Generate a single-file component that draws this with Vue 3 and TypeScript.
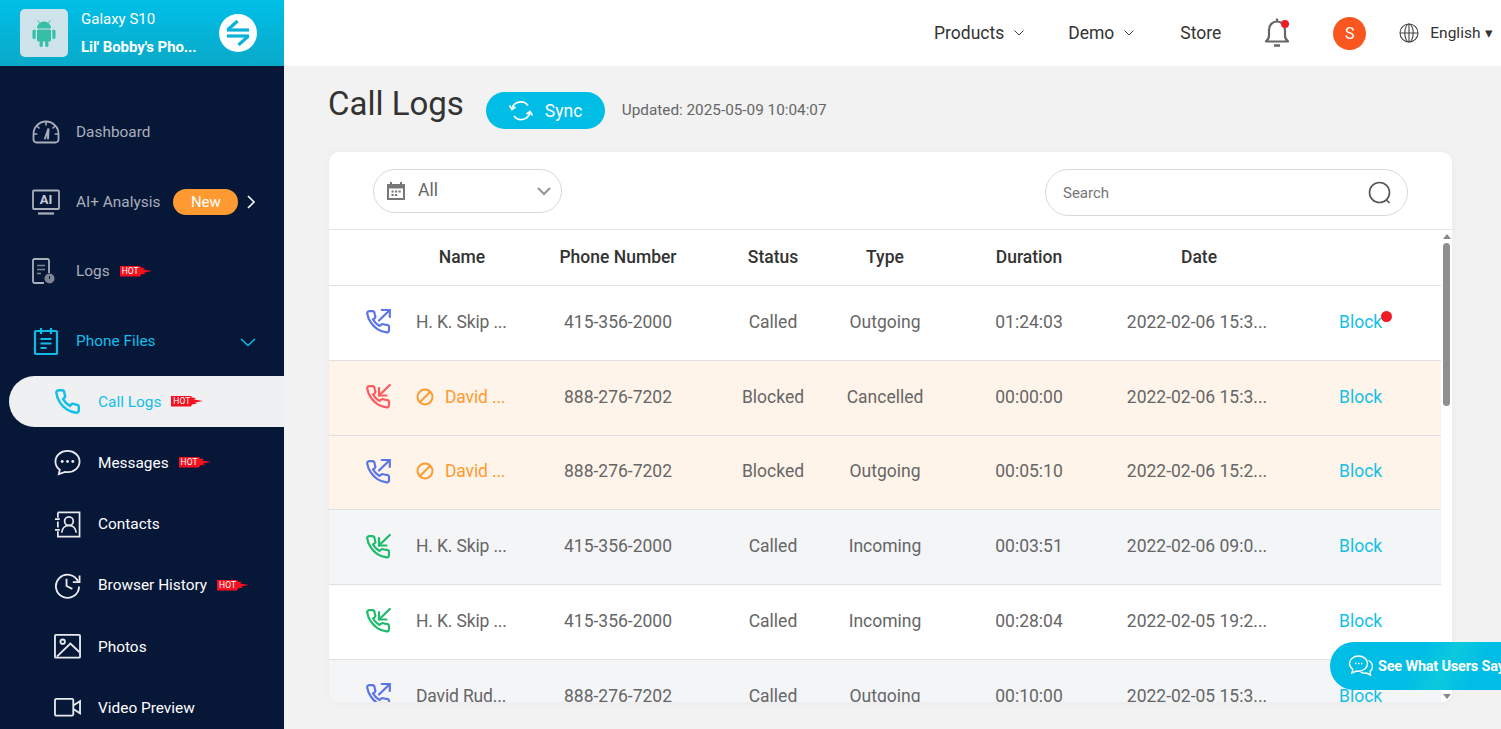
<script setup lang="ts">
type Dir = 'out' | 'in'
interface Row {
  name: string
  phone: string
  status: string
  type: string
  duration: string
  date: string
  dir: Dir
  tone: 'blue' | 'red' | 'green'
  blocked?: boolean
  bg: 'white' | 'peach' | 'gray'
  dot?: boolean
}
const rows: Row[] = [
  { name: 'H. K. Skip ...', phone: '415-356-2000', status: 'Called', type: 'Outgoing', duration: '01:24:03', date: '2022-02-06 15:3...', dir: 'out', tone: 'blue', bg: 'white', dot: true },
  { name: 'David ...', phone: '888-276-7202', status: 'Blocked', type: 'Cancelled', duration: '00:00:00', date: '2022-02-06 15:3...', dir: 'in', tone: 'red', blocked: true, bg: 'peach' },
  { name: 'David ...', phone: '888-276-7202', status: 'Blocked', type: 'Outgoing', duration: '00:05:10', date: '2022-02-06 15:2...', dir: 'out', tone: 'blue', blocked: true, bg: 'peach' },
  { name: 'H. K. Skip ...', phone: '415-356-2000', status: 'Called', type: 'Incoming', duration: '00:03:51', date: '2022-02-06 09:0...', dir: 'in', tone: 'green', bg: 'gray' },
  { name: 'H. K. Skip ...', phone: '415-356-2000', status: 'Called', type: 'Incoming', duration: '00:28:04', date: '2022-02-05 19:2...', dir: 'in', tone: 'green', bg: 'white' },
  { name: 'David Rud...', phone: '888-276-7202', status: 'Called', type: 'Outgoing', duration: '00:10:00', date: '2022-02-05 15:3...', dir: 'out', tone: 'blue', bg: 'gray' }
]
const headers = ['Name', 'Phone Number', 'Status', 'Type', 'Duration', 'Date']
const phonePath =
  'M22 16.92v3a2 2 0 0 1-2.18 2 19.79 19.79 0 0 1-8.63-3.07 19.5 19.5 0 0 1-6-6 19.79 19.79 0 0 1-3.07-8.67A2 2 0 0 1 4.11 2h3a2 2 0 0 1 2 1.72 12.84 12.84 0 0 0 .7 2.81 2 2 0 0 1-.45 2.11L8.09 9.91a16 16 0 0 0 6 6l1.27-1.27a2 2 0 0 1 2.11-.45 12.84 12.84 0 0 0 2.81.7A2 2 0 0 1 22 16.92z'
</script>

<template>
  <div class="shell">
    <aside class="side">
      <div class="device">
        <div class="device-logo">
          <svg width="26" height="30" viewBox="0 0 26 30" fill="#34bfa6">
            <path d="M6 10.500a7 7 0 0 1 14 0z" />
            <rect x="6" y="11.500" width="14" height="12" rx="1.500" />
            <rect x="1.500" y="11.500" width="3.200" height="9.500" rx="1.600" />
            <rect x="21.300" y="11.500" width="3.200" height="9.500" rx="1.600" />
            <rect x="8.600" y="22" width="3.200" height="7" rx="1.600" />
            <rect x="14.200" y="22" width="3.200" height="7" rx="1.600" />
            <path d="M8.500 5 6.700 2.200M17.500 5l1.800-2.800" stroke="#34bfa6" stroke-width="0.900" />
          </svg>
        </div>
        <div class="device-text">
          <div class="device-model">Galaxy S10</div>
          <div class="device-name">Lil' Bobby's Pho...</div>
        </div>
        <div class="swap">
          <svg width="26" height="26" viewBox="0 0 26 26" fill="none" stroke="#0ab2d8" stroke-width="3.200">
            <path d="M2 10h22" />
            <path d="M2.500 10 12.500 1" />
            <path d="M2 16h22" />
            <path d="M23.500 16 13.500 25" />
          </svg>
        </div>
      </div>

      <nav class="menu">
        <div class="item">
          <svg class="ico" viewBox="0 0 28 24" fill="none" stroke="#a9afbb" stroke-width="1.800" stroke-linecap="round">
            <path d="M4.500 22.500A3 3 0 0 1 1.500 19.500v-5.500a12.500 12.500 0 0 1 25 0v5.500a3 3 0 0 1-3 3z" />
            <path d="M13 18.500 16.500 8.500l-.5 10" stroke-width="2" />
            <path d="M14 2v3M5 6l2 2M23 6l-2 2M1.800 14h3M23.200 14h3" stroke-width="1.500" />
          </svg>
          <span class="label">Dashboard</span>
        </div>
        <div class="item">
          <svg class="ico" viewBox="0 0 28 26" fill="none" stroke="#a9afbb" stroke-width="1.800">
            <rect x="1" y="1.500" width="26" height="18.500" rx="1" />
            <path d="M6 24.500h16" stroke-width="2.200" />
          </svg>
          <span class="ai-mark">AI</span>
          <span class="label">AI+ Analysis</span>
          <span class="new">New</span>
          <svg class="chev-r" width="9" height="14" viewBox="0 0 9 14" fill="none" stroke="#fff" stroke-width="1.600">
            <path d="m1 1 6 6-6 6" />
          </svg>
        </div>
        <div class="item">
          <svg class="ico" viewBox="3 0 28 28" fill="none" stroke="#a9afbb" stroke-width="1.800">
            <path d="M20 16V3.500A1.500 1.500 0 0 0 18.500 2H5.500A1.500 1.500 0 0 0 4 3.500v21A1.500 1.500 0 0 0 5.500 26H15" />
            <path d="M8 8.500h8M8 12.500h8M8 16.500h4" stroke-width="1.600" stroke="#7d8492" />
            <circle cx="20.500" cy="21.500" r="5" fill="#7d8492" stroke="none" />
            <path d="M20.500 19v3" stroke="#071738" stroke-width="1" />
          </svg>
          <span class="label">Logs</span>
          <span class="hot">
            <svg width="32" height="11" viewBox="0 0 32 11"><path d="M0 0h20l1 1.500 4 .5-2 1.500 9 1.500-8 1.500 2 1-5 1-1 2H0z" fill="#f5101f" /></svg>
            <span class="hot-text">HOT</span>
          </span>
        </div>
        <div class="item active-group">
          <svg class="ico" viewBox="0 0 28 28" fill="none" stroke="#0dbbe6" stroke-width="2.200">
            <rect x="3" y="4" width="22" height="23" rx="1" />
            <path d="M9 1v6M19 1v6M8.500 12h11M8.500 16.500h11M8.500 21h6" />
          </svg>
          <span class="label cyan">Phone Files</span>
          <svg class="chev-d" width="16" height="9" viewBox="0 0 16 9" fill="none" stroke="#0dbbe6" stroke-width="1.600">
            <path d="m1 1 7 6.500L15 1" />
          </svg>
        </div>

        <div class="sub current">
          <svg class="sub-ico" viewBox="0 0 24 24" fill="none" stroke="#12bfe8" stroke-width="2.200"><path :d="phonePath" /></svg>
          <span class="label cyan">Call Logs</span>
          <span class="hot">
            <svg width="32" height="11" viewBox="0 0 32 11"><path d="M0 0h20l1 1.500 4 .5-2 1.500 9 1.500-8 1.500 2 1-5 1-1 2H0z" fill="#f5101f" /></svg>
            <span class="hot-text">HOT</span>
          </span>
        </div>
        <div class="sub">
          <svg class="sub-ico" viewBox="0 0 28 28" fill="none" stroke="#e8eaee" stroke-width="1.900">
            <path d="M14 2C7 2 1.500 6.700 1.500 13c0 3.500 1.700 6.500 4.500 8.500L5 26l6.500-2.200c.8.100 1.700.200 2.500.200 7 0 12.500-4.800 12.500-11S21 2 14 2z" />
            <circle cx="8.500" cy="13" r="1.500" fill="#e8eaee" stroke="none" />
            <circle cx="14" cy="13" r="1.500" fill="#e8eaee" stroke="none" />
            <circle cx="19.500" cy="13" r="1.500" fill="#e8eaee" stroke="none" />
          </svg>
          <span class="label white">Messages</span>
          <span class="hot">
            <svg width="32" height="11" viewBox="0 0 32 11"><path d="M0 0h20l1 1.500 4 .5-2 1.500 9 1.500-8 1.500 2 1-5 1-1 2H0z" fill="#f5101f" /></svg>
            <span class="hot-text">HOT</span>
          </span>
        </div>
        <div class="sub">
          <svg class="sub-ico" viewBox="0 0 28 28" fill="none" stroke="#e8eaee" stroke-width="1.800">
            <path d="M4 1.500h22.500v25H4V21M4 7V1.500M4 11v6" />
            <path d="M1 8.500h5M1 19.500h5" />
            <circle cx="15.500" cy="10.500" r="4.500" />
            <path d="M8 22.500c.5-4.500 3.500-7.500 7.500-7.500s7 3 7.500 7.500" />
          </svg>
          <span class="label white">Contacts</span>
        </div>
        <div class="sub">
          <svg class="sub-ico" viewBox="0 0 28 28" fill="none" stroke="#e8eaee" stroke-width="1.900">
            <path d="M25 10A12 12 0 1 0 26 15" />
            <path d="M26.500 3.500V10.500H19.500" />
            <path d="M13 7v7.500l6 3" />
          </svg>
          <span class="label white">Browser History</span>
          <span class="hot">
            <svg width="32" height="11" viewBox="0 0 32 11"><path d="M0 0h20l1 1.500 4 .5-2 1.500 9 1.500-8 1.500 2 1-5 1-1 2H0z" fill="#f5101f" /></svg>
            <span class="hot-text">HOT</span>
          </span>
        </div>
        <div class="sub">
          <svg class="sub-ico" viewBox="0 0 28 26" fill="none" stroke="#e8eaee" stroke-width="1.900">
            <rect x="1" y="1" width="26" height="23.500" rx="1" />
            <circle cx="9" cy="8" r="2.300" />
            <path d="m3 23.500 14-13.500 9.500 9" />
          </svg>
          <span class="label white">Photos</span>
        </div>
        <div class="sub">
          <svg class="sub-ico" viewBox="0 0 28 22" fill="none" stroke="#e8eaee" stroke-width="1.900">
            <rect x="1" y="2" width="19" height="17.500" rx="1.500" />
            <path d="m20 9 7-4.500v12.500l-7-4.500" />
          </svg>
          <span class="label white">Video Preview</span>
        </div>
      </nav>
    </aside>

    <div class="right">
      <header class="top">
        <span class="nav-link first">Products</span>
        <svg class="nav-chev" width="10" height="6" viewBox="0 0 10 6" fill="none" stroke="#444" stroke-width="1"><path d="m.5.5 4.500 4.500L9.500.5" /></svg>
        <span class="nav-link demo">Demo</span>
        <svg class="nav-chev" width="10" height="6" viewBox="0 0 10 6" fill="none" stroke="#444" stroke-width="1"><path d="m.5.5 4.500 4.500L9.500.5" /></svg>
        <span class="nav-link store">Store</span>
        <span class="bell">
          <svg width="26" height="32" viewBox="0 0 26 32" fill="none" stroke="#666" stroke-width="2.200">
            <path d="M2 24.500c2-1.500 3-3 3-6V13c0-5 3.500-8.500 8-8.500s8 3.500 8 8.500v5.500c0 3 1 4.500 3 6z" stroke-linejoin="round" />
            <path d="M10 28.500h6" stroke-width="2.500" />
            <path d="M13 1.500v3" />
          </svg>
          <i class="bell-dot"></i>
        </span>
        <span class="avatar">S</span>
        <svg class="globe" width="20" height="20" viewBox="0 0 20 20" fill="none" stroke="#444" stroke-width="1.100">
          <circle cx="10" cy="10" r="9" />
          <ellipse cx="10" cy="10" rx="4.200" ry="9" />
          <path d="M1 10h18M10 1v18" />
        </svg>
        <span class="lang">English</span>
        <span class="caret">▾</span>
      </header>

      <main class="main">
        <div class="title-row">
          <h1 class="title">Call Logs</h1>
          <button class="sync">
            <svg width="24" height="22" viewBox="0 0 24 22" fill="none" stroke="#fff" stroke-width="1.700">
              <path d="M3 9a9 9 0 0 1 16-3.500" />
              <path d="m0.500 5.500 2.500 4 3.500-2.500" />
              <path d="M21 12a9 9 0 0 1-16 4" />
              <path d="m23.500 15.500-2.500-4-3.500 2.500" />
            </svg>
            <span>Sync</span>
          </button>
          <span class="updated">Updated: 2025-05-09 10:04:07</span>
        </div>

        <section class="card">
          <div class="toolbar">
            <div class="select">
              <svg width="18" height="18" viewBox="0 0 18 18" fill="#777">
                <path d="M3 0h2v2h8V0h2v2h3v16H0V2h3zM2 6.500V16h14V6.500z" />
                <path d="M4.500 8.500h2.200v2H4.500zM8 8.500h2.200v2H8zM11.500 8.500h2.200v2h-2.200zM4.500 12h2.200v2H4.500zM8 12h2.200v2H8z" />
              </svg>
              <span class="select-val">All</span>
              <svg class="select-chev" width="14" height="9" viewBox="0 0 14 9" fill="none" stroke="#999" stroke-width="2.200"><path d="m1 1 6 6 6-6" /></svg>
            </div>
            <div class="search">
              <span class="search-text">Search</span>
              <svg width="24" height="24" viewBox="0 0 24 24" fill="none" stroke="#555" stroke-width="1.600">
                <circle cx="11.500" cy="11.500" r="10" />
                <path d="m18.500 19 3 3" />
              </svg>
            </div>
          </div>

          <div class="table-wrap">
            <div class="table">
              <div class="grid head">
                <span></span>
                <span v-for="h in headers" :key="h" class="cell">{{ h }}</span>
                <span></span>
              </div>
              <div v-for="(r, i) in rows" :key="i" class="grid row" :class="r.bg">
                <span class="icon-cell" :class="r.tone">
                  <svg width="25" height="25" viewBox="0 0 25 25" fill="none" stroke="currentColor" stroke-width="2.200" stroke-linecap="round" stroke-linejoin="round">
                    <path d="M23 18.500v2.700a2.200 2.200 0 0 1-2.400 2.200 21 21 0 0 1-9.200-3.300 20.500 20.500 0 0 1-6.400-6.400A21 21 0 0 1 1.200 4.500 2.200 2.200 0 0 1 3.400 2.100h2.900a2.200 2.200 0 0 1 2.200 1.900c.1 1 .4 2 .7 3a2.200 2.200 0 0 1-.5 2.300L7 10.500a17 17 0 0 0 6.500 6.500l1.600-1.300a2.200 2.200 0 0 1 2.300-.5c1 .3 2 .6 3 .7a2.200 2.200 0 0 1 2.600 2.600z" />
                    <template v-if="r.dir === 'out'">
                      <path d="M23.800 8V1h-8" />
                      <path d="M13 11.500 23.800 1" />
                    </template>
                    <template v-else>
                      <path d="M13 4v7.500h7.500" />
                      <path d="M23.800 1 13 11.500" />
                    </template>
                  </svg>
                </span>
                <span class="name-cell" :class="{ orange: r.blocked }">
                  <svg v-if="r.blocked" class="ban" width="18" height="18" viewBox="0 0 18 18" fill="none" stroke="#ff9a30" stroke-width="2">
                    <circle cx="9" cy="9" r="7.500" />
                    <path d="m4 14 10-10" />
                  </svg>
                  {{ r.name }}
                </span>
                <span class="cell">{{ r.phone }}</span>
                <span class="cell">{{ r.status }}</span>
                <span class="cell">{{ r.type }}</span>
                <span class="cell">{{ r.duration }}</span>
                <span class="cell date">{{ r.date }}</span>
                <span class="cell block">
                  <span class="block-link">Block<i v-if="r.dot" class="block-dot"></i></span>
                </span>
              </div>
            </div>
            <div class="scrollbar">
              <i class="arrow up"></i>
              <div class="thumb"></div>
              <i class="arrow down"></i>
            </div>
          </div>
        </section>
      </main>
    </div>

    <div class="float">
      <svg width="26" height="24" viewBox="0 0 26 24" fill="none" stroke="#fff" stroke-width="1.400">
        <path d="M10.500 2C5.500 2 1.500 5.300 1.500 9.500c0 2.400 1.300 4.500 3.300 5.900L4 19l4.500-2c.7.100 1.300.200 2 .200 5 0 9-3.400 9-7.700S15.500 2 10.500 2z" />
        <path d="M20.500 6.500c2.500 1.300 4 3.500 4 6 0 2-1 3.800-2.500 5l.5 3.500-4-2c-2 .4-4.500 0-6-1" />
        <path d="M7 9.500h1.500M10 9.500h1.500M13 9.500h1.500" stroke-width="1.600" />
      </svg>
      <span class="float-text">See What Users Say</span>
    </div>
  </div>
</template>

<style scoped>
.shell {
  position: relative;
  display: flex;
  width: 1501px;
  height: 729px;
  overflow: hidden;
  font-family: Roboto, "Liberation Sans", sans-serif;
  background: #f2f2f2;
  color: #666;
}
.side {
  flex: 0 0 284px;
  background: #071738;
  display: flex;
  flex-direction: column;
}
.device {
  flex: none;
  height: 66px;
  background: linear-gradient(180deg, #00bfe7 0%, #0aa9c8 100%);
  display: flex;
  align-items: center;
  padding-left: 20px;
  color: #fff;
}
.device-logo {
  width: 48px;
  height: 48px;
  border-radius: 5px;
  background: #cfe3ea;
  display: flex;
  align-items: center;
  justify-content: center;
}
.device-text {
  margin-left: 13px;
  width: 125px;
  white-space: nowrap;
}
.device-model {
  font-size: 15px;
  line-height: 20px;
  margin-bottom: 8px;
}
.device-name {
  font-size: 15px;
  line-height: 20px;
  font-weight: 700;
  letter-spacing: -0.1px;
}
.swap {
  width: 38px;
  height: 38px;
  border-radius: 50%;
  background: #fff;
  display: flex;
  align-items: center;
  justify-content: center;
  margin-left: 13px;
}
.menu {
  flex: none;
  padding-top: 31px;
}
.item {
  position: relative;
  height: 69.75px;
  display: flex;
  align-items: center;
  padding-left: 32px;
}
.ico {
  width: 28px;
  height: 28px;
  flex: none;
}
.label {
  font-size: 15.4px;
  color: #a9afbb;
  margin-left: 16px;
  white-space: nowrap;
}
.label.cyan {
  color: #12bfe8;
}
.label.white {
  color: #fff;
  margin-left: 0;
}
.sub .label.cyan {
  margin-left: 0;
}
.ai-mark {
  position: absolute;
  left: 39px;
  top: 25px;
  width: 14px;
  text-align: center;
  font-size: 13px;
  line-height: 16px;
  font-weight: 700;
  color: #c9ced6;
}
.new {
  width: 65px;
  height: 26px;
  border-radius: 13px;
  background: #ff9a33;
  color: #fff;
  font-size: 15px;
  line-height: 26px;
  text-align: center;
  margin-left: 13px;
}
.chev-r {
  margin-left: 9px;
}
.chev-d {
  position: absolute;
  left: 240px;
  top: 32px;
}
.hot {
  position: relative;
  width: 32px;
  height: 11px;
  margin-left: 10px;
  flex: none;
  display: block;
}
.hot svg {
  display: block;
}
.hot-text {
  position: absolute;
  left: 2px;
  top: 0;
  font-size: 8.500px;
  line-height: 11px;
  color: #fff;
}
.sub {
  height: 51px;
  margin-bottom: 10.300px;
  margin-left: 9px;
  border-radius: 26px 0 0 26px;
  display: flex;
  align-items: center;
  padding-left: 89px;
  position: relative;
}
.sub.current {
  background: #eef0f2;
}
.sub-ico {
  position: absolute;
  left: 45px;
  top: 12px;
  width: 27px;
  height: 27px;
}
.right {
  flex: 1;
  min-width: 0;
  display: flex;
  flex-direction: column;
}
.top {
  flex: none;
  height: 66px;
  background: #fff;
  display: flex;
  align-items: center;
  color: #333;
}
.nav-link {
  font-size: 17.500px;
  color: #333;
}
.nav-link.first {
  margin-left: 650px;
}
.nav-chev {
  margin-left: 10px;
}
.nav-link.demo {
  margin-left: 44px;
}
.nav-link.store {
  margin-left: 46px;
}
.bell {
  position: relative;
  width: 26px;
  height: 32px;
  margin-left: 43px;
}
.bell svg {
  display: block;
}
.bell-dot {
  position: absolute;
  right: 1px;
  top: 3px;
  width: 8px;
  height: 8px;
  border-radius: 50%;
  background: #ee1c25;
}
.avatar {
  width: 33px;
  height: 33px;
  border-radius: 50%;
  background: #fa5720;
  color: #fff;
  font-size: 16px;
  line-height: 33px;
  text-align: center;
  margin-left: 43px;
}
.globe {
  margin-left: 33px;
}
.lang {
  font-size: 15.500px;
  color: #333;
  margin-left: 11px;
}
.caret {
  font-size: 15px;
  color: #333;
  margin-left: 5px;
}
.main {
  flex: 1;
  padding: 18px 49px 0 45px;
  min-height: 0;
}
.title-row {
  display: flex;
  align-items: flex-start;
  height: 68px;
}
.title {
  margin: 0 0 0 -1px;
  font-size: 33px;
  font-weight: 400;
  line-height: 40px;
  color: #333;
}
.sync {
  margin: 8px 0 0 22px;
  width: 119px;
  height: 37px;
  border: 0;
  border-radius: 19px;
  background: #00bde6;
  color: #fff;
  font-family: inherit;
  font-size: 17.500px;
  display: flex;
  align-items: center;
  padding: 0 0 0 23px;
  gap: 12px;
}
.updated {
  margin: 8px 0 0 17px;
  font-size: 15.300px;
  line-height: 37px;
  color: #666;
}
.card {
  height: 550px;
  background: #fff;
  border-radius: 10px;
  box-shadow: 0 0 10px rgba(0, 0, 0, 0.04);
  overflow: hidden;
  display: flex;
  flex-direction: column;
}
.toolbar {
  flex: none;
  height: 78px;
  border-bottom: 1px solid #e3e4e8;
  box-sizing: border-box;
  position: relative;
  padding: 17px 44px 0 44px;
  display: flex;
  justify-content: space-between;
  align-items: flex-start;
}
.select {
  width: 189px;
  height: 44px;
  box-sizing: border-box;
  border: 1px solid #d8d8d8;
  border-radius: 22px;
  display: flex;
  align-items: center;
  padding: 0 10px 0 13px;
}
.select-val {
  font-size: 17.500px;
  color: #666;
  margin: -2px 0 0 13px;
  flex: 1;
}
.search {
  width: 363px;
  height: 47px;
  box-sizing: border-box;
  border: 1px solid #d8d8d8;
  border-radius: 24px;
  display: flex;
  align-items: center;
  justify-content: space-between;
  padding: 0 15px 0 17px;
}
.search-text {
  font-size: 15px;
  color: #757575;
}
.table-wrap {
  flex: 1;
  min-height: 0;
  display: flex;
}
.table {
  flex: 1;
  min-width: 0;
  overflow: hidden;
}
.grid {
  display: grid;
  grid-template-columns: 87px 92px 220px 90px 134px 154px 186px 149px;
  align-items: center;
  box-sizing: border-box;
  border-bottom: 1px solid #e0e0e3;
}
.head {
  height: 56px;
  font-size: 17.500px;
  font-weight: 500;
  color: #333;
}
.row {
  height: 74.750px;
  font-size: 17.500px;
  color: #666;
}
.row.white {
  background: #fff;
}
.row.peach {
  background: #fff4ea;
}
.row.gray {
  background: #f4f5f7;
}
.cell {
  text-align: center;
  white-space: nowrap;
  margin-top: -2px;
}
.cell.date {
  padding-right: 4px;
}
.cell.block {
  text-align: left;
  padding-left: 47px;
}
.block-link {
  position: relative;
  color: #12bfe8;
}
.block-dot {
  position: absolute;
  right: -10px;
  top: -1px;
  width: 11px;
  height: 11px;
  border-radius: 50%;
  background: #ee1c25;
}
.icon-cell {
  display: flex;
  justify-content: flex-end;
  padding-right: 25px;
  margin-top: -2px;
}
.icon-cell svg {
  display: block;
}
.icon-cell.blue {
  color: #5b75e6;
}
.icon-cell.red {
  color: #ff5a5f;
}
.icon-cell.green {
  color: #1fbb6c;
}
.name-cell {
  white-space: nowrap;
  margin-top: -2px;
  display: flex;
  align-items: center;
  letter-spacing: -0.150px;
}
.name-cell.orange {
  color: #ff9a30;
}
.ban {
  margin-right: 11px;
  flex: none;
}
.scrollbar {
  flex: 0 0 11px;
  background: #fff;
  display: flex;
  flex-direction: column;
  align-items: center;
  position: relative;
}
.arrow {
  width: 0;
  height: 0;
  border-left: 4px solid transparent;
  border-right: 4px solid transparent;
}
.arrow.up {
  border-bottom: 5px solid #888;
  margin-top: 4px;
}
.arrow.down {
  border-top: 5px solid #888;
  position: absolute;
  bottom: 3px;
}
.thumb {
  width: 7px;
  height: 163px;
  margin-top: 4px;
  border-radius: 4px;
  background: #8f8f8f;
}
.float {
  position: absolute;
  left: 1330px;
  top: 642px;
  width: 190px;
  height: 48px;
  border-radius: 24px 0 0 24px;
  background: linear-gradient(120deg, #00bde6 0%, #00bde6 45%, #0cc9de 60%, #00bde6 75%);
  display: flex;
  align-items: center;
  padding-left: 18px;
  color: #fff;
  box-sizing: border-box;
}
.float-text {
  font-size: 14.500px;
  font-weight: 700;
  margin-left: 4px;
  white-space: nowrap;
  letter-spacing: -0.200px;
}
</style>
